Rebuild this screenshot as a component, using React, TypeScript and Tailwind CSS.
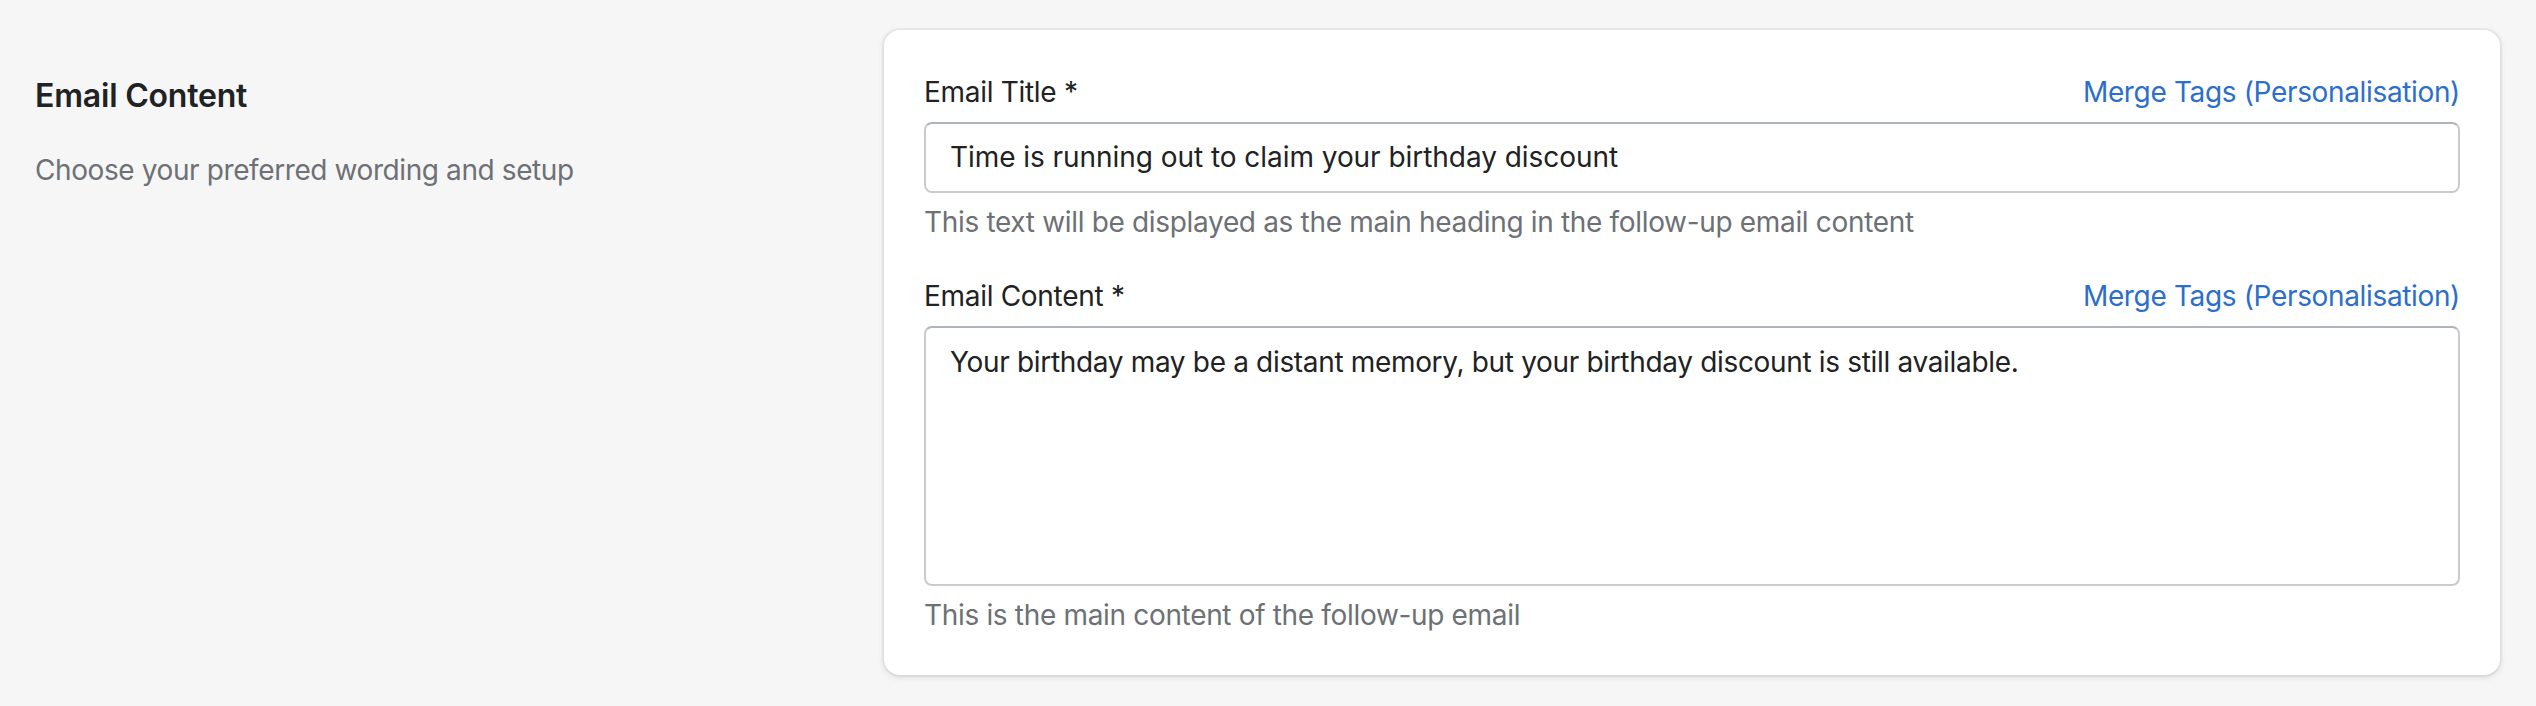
import React from "react";

const font = { fontFamily: "Inter, 'Noto Sans', sans-serif" };

function Field({
  label,
  helper,
  multiline,
  value,
  className,
}: {
  label: string;
  helper: string;
  multiline?: boolean;
  value: string;
  className?: string;
}) {
  return (
    <div className={className}>
      <div className="flex items-center justify-between h-[40px] leading-[40px] mb-[10px]">
        <span className="text-[28px] tracking-[-0.3px] text-[#202223]">{label}</span>
        <a className="text-[28px] tracking-[-0.35px] text-[#2c6ecb] cursor-pointer">Merge Tags (Personalisation)</a>
      </div>
      <div
        className={
          multiline
            ? "h-[260px] rounded-[8px] border-2 border-[#c9cccf] border-t-[#aeb4b9] bg-white px-[24px] py-[14px] text-[28px] tracking-[-0.33px] leading-[40px] text-[#202223]"
            : "h-[71px] rounded-[8px] border-2 border-[#c9cccf] border-t-[#aeb4b9] bg-white px-[24px] py-[13px] text-[28px] tracking-[-0.05px] leading-[40px] text-[#202223]"
        }
      >
        {value}
      </div>
      <div className="mt-[9px] text-[28px] tracking-[-0.33px] leading-[40px] text-[#6d7175]">{helper}</div>
    </div>
  );
}

export default function App() {
  return (
    <div className="min-h-[706px] w-full bg-[#f6f6f7]" style={font}>
      <div className="flex pt-[30px] pl-[35px] pr-[36px]">
        <div className="w-[849px] shrink-0 pt-[46px]">
          <div className="text-[32px] tracking-[-0.2px] leading-[40px] font-semibold text-[#202223]">Email Content</div>
          <div className="mt-[34px] text-[28px] tracking-[-0.4px] leading-[40px] text-[#6d7175]">
            Choose your preferred wording and setup
          </div>
        </div>
        <div className="flex-1 rounded-2xl bg-white px-[40px] pt-[42px] pb-[40px] shadow-[0_0_0_2px_rgba(63,63,68,0.05),0_2px_6px_0_rgba(63,63,68,0.15)]">
          <Field
            label="Email Title *"
            value="Time is running out to claim your birthday discount"
            helper="This text will be displayed as the main heading in the follow-up email content"
          />
          <Field
            className="mt-[34px]"
            label="Email Content *"
            multiline
            value="Your birthday may be a distant memory, but your birthday discount is still available."
            helper="This is the main content of the follow-up email"
          />
        </div>
      </div>
    </div>
  );
}
